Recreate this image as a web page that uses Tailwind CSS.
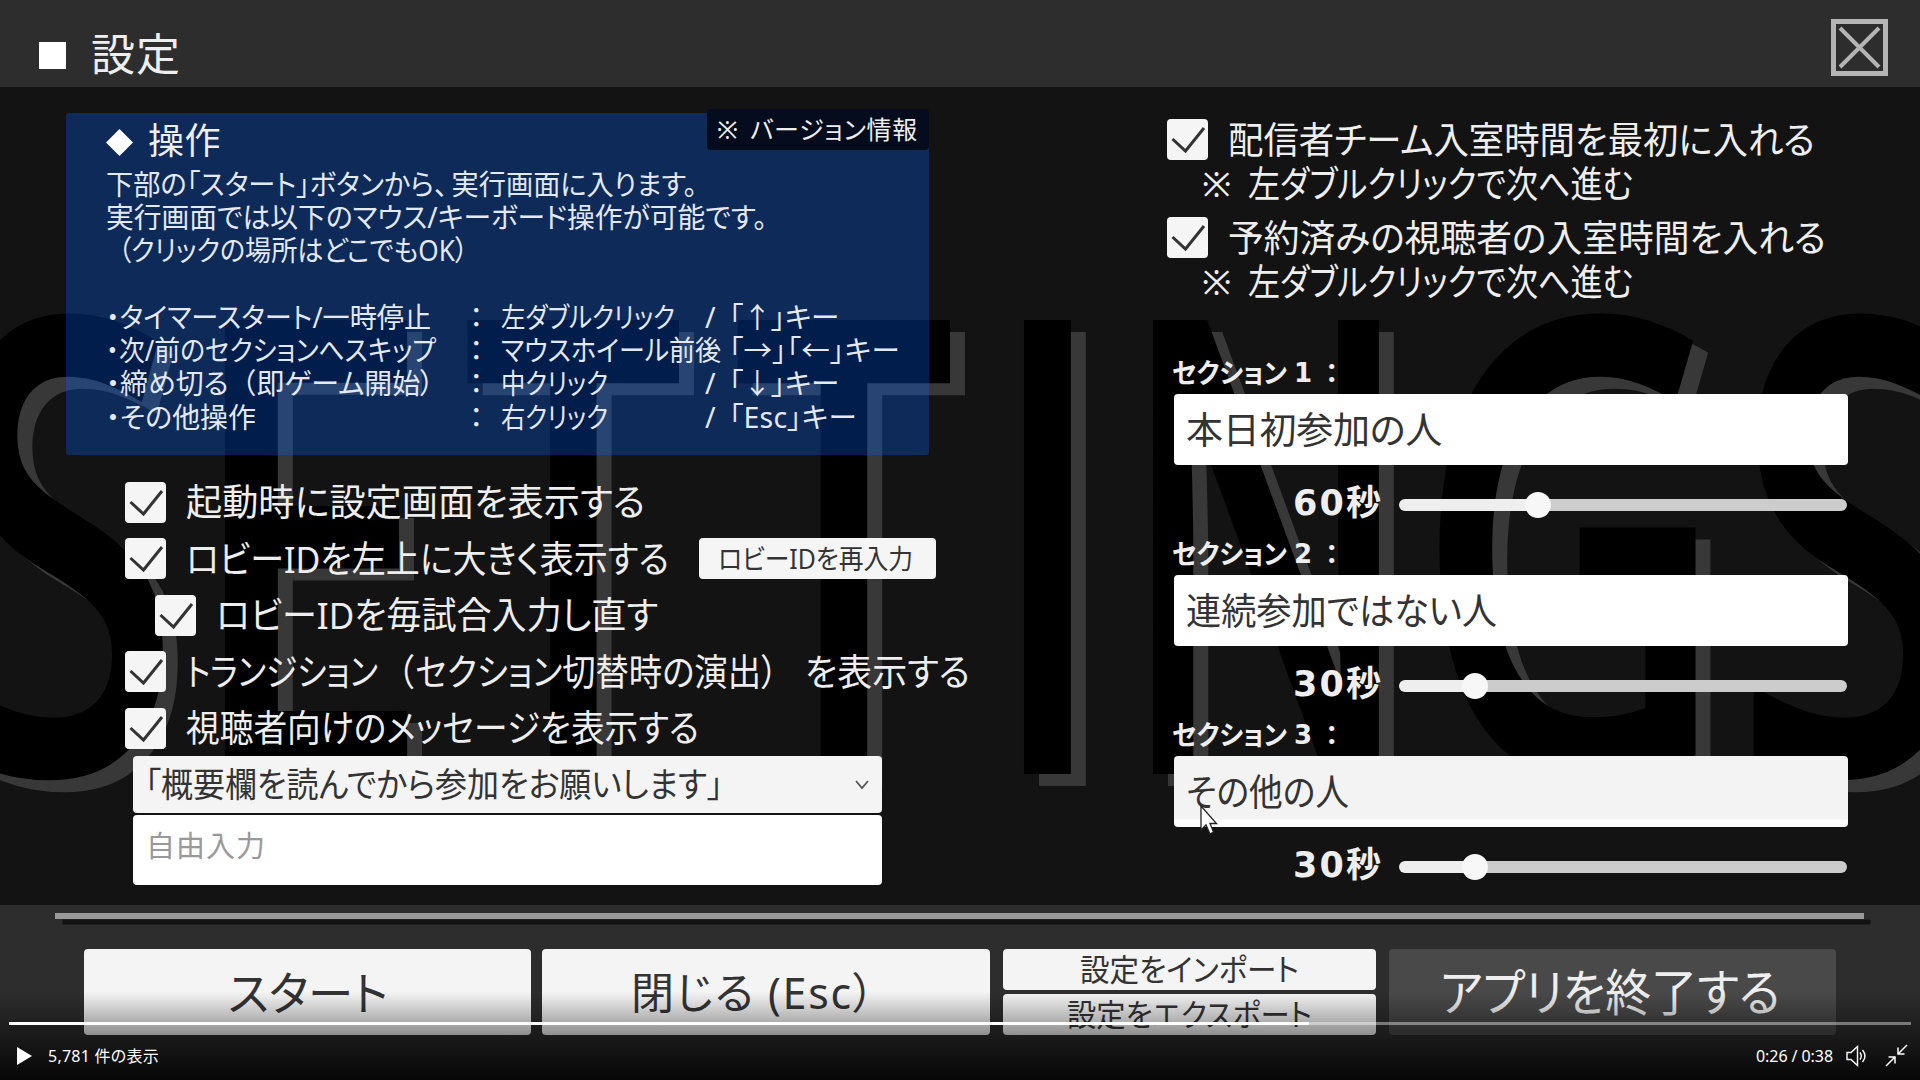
<!DOCTYPE html>
<html lang="ja">
<head>
<meta charset="utf-8">
<title>設定</title>
<script src="https://cdn.jsdelivr.net/npm/@tailwindcss/browser@4"></script>
</head>
<body class="w-[1920px] h-[1080px] overflow-hidden bg-[#131313] font-['Noto_Sans','Noto_Sans_CJK_JP',sans-serif] [font-feature-settings:'palt'] text-[#eeeeee] leading-none whitespace-nowrap">
<svg class="hidden">
  <symbol id="check" viewBox="0 0 41 41"><path d="M5.500 20L18.500 32L37 9" fill="none" stroke="#333" stroke-width="3"/></symbol>
</svg>
<div class="relative w-[1920px] h-[1080px] flex flex-col overflow-hidden">

  <!-- backdrop lettering -->
  <svg class="absolute inset-0 w-[1920px] h-[1080px]" viewBox="0 0 1920 1080" font-family="Open Sans, sans-serif" font-size="636" font-weight="600">
    <defs>
      <g id="letters">
        <text data-x="-38" data-r="167">S</text>
        <text data-x="225" data-r="408">E</text>
        <text data-x="462" data-r="684">T</text>
        <text data-x="732" data-r="955">T</text>
        <text data-x="1024" data-r="1074">I</text>
        <text data-x="1153" data-r="1384">N</text>
        <text data-x="1434" data-r="1699">G</text>
        <text data-x="1753" data-r="1958">S</text>
      </g>
    </defs>
    <use href="#letters" x="15" y="12" fill="#383838"/>
    <use href="#letters" fill="#000"/>
  </svg>

  <header class="relative h-[87px] shrink-0 bg-[#2d2d2d] flex items-start justify-between pl-[39px] pr-8">
    <div class="flex items-center pt-[31px]">
      <span class="w-[27px] h-[27px] bg-white mt-0.5"></span>
      <h1 class="ml-[25px] -mt-px h-12 leading-[48px] text-[44px]"><span data-w="90">設定</span></h1>
    </div>
    <svg class="w-[57px] h-[57px] mt-[19px]" viewBox="0 0 57 57" fill="none" stroke="#b4b4b4"><rect x="2.500" y="2.500" width="52" height="52" stroke-width="5"/><path d="M9 9L48 48M48 9L9 48" stroke-width="4"/></svg>
  </header>

  <main class="relative h-[818px] shrink-0 flex">
    <section class="w-[1100px] pl-[66px] pt-[26px]">
      <div class="relative w-[863px] h-[342px] rounded-[3px] bg-[#0061fd]/30 pl-10 pt-2">
        <div class="absolute right-0 -top-1 w-[222px] h-[41px] rounded bg-[#040c1e] flex items-center pl-[10px] text-[25px]"><span>※</span><span class="ml-[12px]" data-w="168">バージョン情報</span></div>
        <div class="h-10 flex items-center text-[36px]">
          <svg class="w-[27px] h-[27px] mt-0.5" viewBox="0 0 27 27"><path d="M13.500 0L27 13.500L13.500 27L0 13.500Z" fill="#fff"/></svg>
          <span class="ml-[15px]" data-w="73">操作</span>
        </div>
        <div class="mt-[6.500px] text-[28.500px] leading-[33.300px] text-[#e4e8f0]">
          <p class="h-[33.300px]"><span data-w="591">下部の「スタート」ボタンから<i class="not-italic [font-feature-settings:normal] -mr-2.5">、</i>実行画面に入ります。</span></p>
          <p class="h-[33.300px]"><span data-w="661">実行画面では以下のマウス/キーボード操作が可能です。</span></p>
          <p class="h-[33.300px] pl-[12px]"><span data-w="350">（クリックの場所はどこでもOK）</span></p>
          <div class="grid grid-cols-[361px_34px_202px_26px_auto] auto-rows-[33.300px] mt-[33.300px]">
            <span><span data-w="325">・タイマースタート/一時停止</span></span><span class="pl-0.5">：</span><span><span data-w="174">左ダブルクリック</span></span><span class="pl-0.5">/</span><span><span data-w="110">「<i class="not-italic [font-feature-settings:normal]">↑</i>」キー</span></span>
            <span><span data-w="330">・次/前のセクションへスキップ</span></span><span class="pl-0.5">：</span><span><span data-w="220">マウスホイール前後</span></span><span></span><span><span data-w="171">「→」「←」キー</span></span>
            <span><span data-w="328">・締め切る<i class="not-italic [font-feature-settings:normal]">（</i>即ゲーム開始）</span></span><span class="pl-0.5">：</span><span><span data-w="107">中クリック</span></span><span class="pl-0.5">/</span><span><span data-w="110">「<i class="not-italic [font-feature-settings:normal]">↓</i>」キー</span></span>
            <span><span data-w="150">・その他操作</span></span><span class="pl-0.5">：</span><span><span data-w="107">右クリック</span></span><span class="pl-0.5">/</span><span><span data-w="128">「Esc」キー</span></span>
          </div>
        </div>
      </div>

      <div class="mt-[19px] pl-[59px] text-[37px] leading-[56.500px]">
        <div class="h-[56.500px] flex items-center"><svg class="shrink-0 w-[41px] h-[41px] rounded bg-[#f5f5f5] mr-[20px]"><use href="#check"/></svg><span data-w="459">起動時に設定画面を表示する</span></div>
        <div class="h-[56.500px] flex items-center"><svg class="shrink-0 w-[41px] h-[41px] rounded bg-[#f5f5f5] mr-[20px]"><use href="#check"/></svg><span class="w-[513px]"><span data-w="483">ロビーIDを左上に大きく表示する</span></span><span class="w-[237px] h-[41px] rounded bg-[#f5f5f5] text-[#333] text-[27px] leading-[41px] pl-[19px]"><span data-w="195">ロビーIDを再入力</span></span></div>
        <div class="h-[56.500px] flex items-center pl-[30px]"><svg class="shrink-0 w-[41px] h-[41px] rounded bg-[#f5f5f5] mr-[20px]"><use href="#check"/></svg><span data-w="442">ロビーIDを毎試合入力し直す</span></div>
        <div class="h-[56.500px] flex items-center"><svg class="shrink-0 w-[41px] h-[41px] rounded bg-[#f5f5f5] mr-[20px]"><use href="#check"/></svg><span data-w="192">トランジション</span><span class="ml-[11px]" data-w="396"><i class="not-italic [font-feature-settings:normal] -ml-2">（</i>セクション切替時の演出）</span><span class="ml-[28px]" data-w="165">を表示する</span></div>
        <div class="h-[56.500px] flex items-center"><svg class="shrink-0 w-[41px] h-[41px] rounded bg-[#f5f5f5] mr-[20px]"><use href="#check"/></svg><span data-w="513">視聴者向けのメッセージを表示する</span></div>
      </div>
      <div class="ml-[67px] w-[749px] h-[57px] rounded bg-[#f4f4f4] text-[#333] text-[34px] flex items-center justify-between pl-[12px] pr-3 -mt-px"><span data-w="578">「概要欄を読んでから参加をお願いします」</span><svg class="w-4 h-4" viewBox="0 0 16 16"><path d="M2 5L8 12L14 5" fill="none" stroke="#555" stroke-width="1.800"/></svg></div>
      <div class="ml-[67px] mt-[2px] w-[749px] h-[70px] rounded bg-white text-[#999] text-[29px] flex items-center pl-[13px] pb-2"><span data-w="120">自由入力</span></div>
    </section>

    <section class="w-[820px] pl-[67px] pt-[30px]">
      <div class="text-[37px]">
        <div class="h-[44px] flex items-center"><svg class="shrink-0 w-[41px] h-[41px] rounded bg-[#f5f5f5] mr-[20px]"><use href="#check"/></svg><span data-w="587">配信者チーム入室時間を最初に入れる</span></div>
        <div class="h-[44px] flex items-center pl-[35px]"><span class="text-[35px]">※</span><span class="ml-[17px]" data-w="385">左ダブルクリックで次へ進む</span></div>
        <div class="h-[44px] mt-[10px] flex items-center"><svg class="shrink-0 w-[41px] h-[41px] rounded bg-[#f5f5f5] mr-[20px]"><use href="#check"/></svg><span data-w="598">予約済みの視聴者の入室時間を入れる</span></div>
        <div class="h-[44px] flex items-center pl-[35px]"><span class="text-[35px]">※</span><span class="ml-[17px]" data-w="385">左ダブルクリックで次へ進む</span></div>
      </div>
      <div class="pl-[6px] mt-[51px]">
        <div class="h-[181px]">
          <div class="h-10 leading-[38px] text-[27px] font-bold flex"><span class="-ml-px" data-w="115">セクション</span><span class="ml-[7px] w-[31px] font-['DejaVu_Sans'] text-[26px]">1</span><span>：</span></div>
          <div class="ml-px w-[674px] h-[71px] rounded bg-white text-[#333] text-[37px] flex items-center pl-3"><span data-w="256">本日初参加の人</span></div>
          <div class="h-[70px] pt-[9px] pl-[120px] flex items-center"><span class="w-[106px] text-[35px] font-bold pb-0.5 font-['DejaVu_Sans','Noto_Sans_CJK_JP']"><span data-w="90">60秒</span></span><div class="relative w-[448px] h-3 rounded-full bg-linear-to-r from-[#eee] from-30% to-[#ccc] to-31%"><span class="absolute -top-[7px] left-[126px] size-[26px] rounded-full bg-[#f7f7f7]"></span></div></div>
        </div>
        <div class="h-[181px]">
          <div class="h-10 leading-[38px] text-[27px] font-bold flex"><span class="-ml-px" data-w="115">セクション</span><span class="ml-[7px] w-[31px] font-['DejaVu_Sans'] text-[26px]">2</span><span>：</span></div>
          <div class="ml-px w-[674px] h-[71px] rounded bg-white text-[#333] text-[37px] flex items-center pl-3"><span data-w="311">連続参加ではない人</span></div>
          <div class="h-[70px] pt-[9px] pl-[120px] flex items-center"><span class="w-[106px] text-[35px] font-bold pb-0.5 font-['DejaVu_Sans','Noto_Sans_CJK_JP']"><span data-w="90">30秒</span></span><div class="relative w-[448px] h-3 rounded-full bg-linear-to-r from-[#eee] from-16% to-[#ccc] to-17%"><span class="absolute -top-[7px] left-[63px] size-[26px] rounded-full bg-[#f7f7f7]"></span></div></div>
        </div>
        <div class="h-[181px]">
          <div class="h-10 leading-[38px] text-[27px] font-bold flex"><span class="-ml-px" data-w="115">セクション</span><span class="ml-[7px] w-[31px] font-['DejaVu_Sans'] text-[26px]">3</span><span>：</span></div>
          <div class="ml-px w-[674px] h-[71px] rounded bg-linear-to-b from-[#f3f3f3] from-88% to-[#fcfcfc] to-90% text-[#333] text-[37px] flex items-center pl-3"><span data-w="163">その他の人</span></div>
          <div class="h-[70px] pt-[9px] pl-[120px] flex items-center"><span class="w-[106px] text-[35px] font-bold pb-0.5 font-['DejaVu_Sans','Noto_Sans_CJK_JP']"><span data-w="90">30秒</span></span><div class="relative w-[448px] h-3 rounded-full bg-linear-to-r from-[#eee] from-16% to-[#ccc] to-17%"><span class="absolute -top-[7px] left-[63px] size-[26px] rounded-full bg-[#f7f7f7]"></span></div></div>
        </div>
      </div>
    </section>
  </main>

  <footer class="relative flex-1 bg-[#2d2d2d] pt-2">
    <div class="ml-[55px] w-[1809px] h-[6px] bg-[#999] shadow-[7px_6px_0_-0.500px_#131313]"></div>
    <div class="mt-[30px] pl-[84px] flex h-[86px] text-[#333]">
      <div class="w-[447px] rounded bg-[#f4f4f4] flex items-center justify-center text-[46px]"><span data-w="160">スタート</span></div>
      <div class="ml-[11px] w-[448px] rounded bg-[#f4f4f4] flex items-center pl-[89px] text-[43px]"><span data-w="245">閉じる (Esc）</span></div>
      <div class="ml-[13px] w-[373px] flex flex-col justify-between text-[31px]">
        <div class="h-[41px] rounded bg-[#f4f4f4] flex items-center justify-center"><span data-w="219">設定をインポート</span></div>
        <div class="h-[41px] rounded bg-[#f4f4f4] flex items-center justify-center"><span data-w="245">設定をエクスポート</span></div>
      </div>
      <div class="ml-[13px] w-[447px] rounded-sm bg-[#494949] text-[#eee] flex items-center pl-[51px] text-[50px]"><span data-w="340">アプリを終了する</span></div>
    </div>
  </footer>

  <!-- mouse pointer -->
  <svg class="absolute left-[1199px] top-[804px] w-5 h-8" viewBox="0 0 20 32"><path d="M2 2V26L7 21L11 30L14.500 28L11 19.500H17.500Z" fill="#fff" stroke="#222" stroke-width="1.300"/></svg>

  <!-- video controls -->
  <div class="absolute inset-x-0 bottom-0 h-[88px] bg-linear-to-b from-black/0 to-black/85 pt-[30px] text-[16px] text-white">
    <div class="mx-[9px] h-[2.500px] bg-white/40"><div class="w-[1300px] h-full bg-white"></div></div>
    <div class="mt-2 h-[46px] flex items-center pl-4 pr-3">
      <svg class="w-4 h-5" viewBox="0 0 16 20"><path d="M1 1L16 10L1 19Z" fill="#fff"/></svg>
      <span class="ml-[16px]" data-w="111">5,781 件の表示</span>
      <span class="ml-auto w-[90px]"><span data-w="77">0:26 / 0:38</span></span>
      <svg class="w-6 h-[22px]" viewBox="0 0 24 22" fill="none" stroke="#fff" stroke-width="1.400"><path d="M1 7.500H5L11.500 1.500V20.500L5 14.500H1Z"/><path d="M14 7.500Q16.500 11 14 14.500M16.500 5Q21.500 11 16.500 17" /></svg>
      <svg class="ml-[15px] w-[23px] h-[23px]" viewBox="0 0 23 23" fill="none" stroke="#fff" stroke-width="1.500"><path d="M22 1L13 10M13 3.500V10H19.500M1 22L10 13M3.500 13H10V19.500"/></svg>
    </div>
  </div>
</div>
<script>
  // Make every label fill its nominal width: loosen short ones with letter
  // spacing, condense long ones so that neighbouring glyphs do not touch
  function fit() {
    document.querySelectorAll('span[data-w]').forEach(function (el) {
      var s = el.style, w = +el.dataset.w;
      s.display = 'inline-block';
      s.letterSpacing = '0px';
      s.transform = 'none';
      s.marginRight = '0px';
      var r = document.createRange();
      r.selectNodeContents(el);
      var natural = r.getBoundingClientRect().width;
      var gap = (w - natural) / Array.from(el.textContent).length;
      if (gap < -0.4) {
        s.transformOrigin = '0 50%';
        s.transform = 'scaleX(' + (w / natural) + ')';
        s.marginRight = (w - natural) + 'px';
      } else {
        s.letterSpacing = gap + 'px';
      }
    });
  }
  fit();
  window.addEventListener('load', fit);
  document.fonts.ready.then(fit);
  [0, 50, 150, 400].forEach(function (ms) { setTimeout(fit, ms); });
  // Stretch each backdrop letter between its left and right edges
  var ctx = document.createElement('canvas').getContext('2d');
  ctx.font = '600 636px "Open Sans"';
  document.querySelectorAll('text[data-x]').forEach(function (t) {
    var m = ctx.measureText(t.textContent), l = -m.actualBoundingBoxLeft;
    var k = (t.dataset.r - t.dataset.x) / (m.actualBoundingBoxRight - l);
    t.setAttribute('transform', 'translate(' + (t.dataset.x - l * k) + ' 774) scale(' + k + ' 1)');
  });
</script>
</body>
</html>
